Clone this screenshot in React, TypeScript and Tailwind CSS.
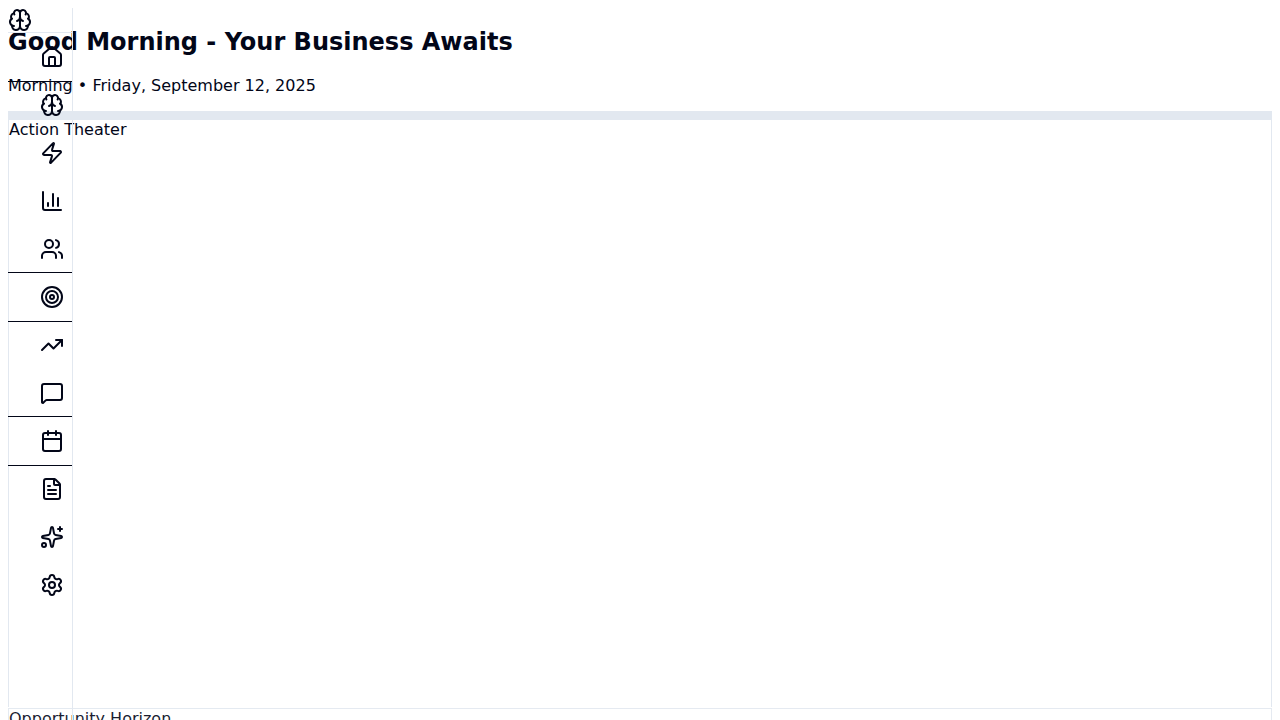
import {
  Brain,
  Calendar,
  ChartColumn,
  FileText,
  House,
  MessageSquare,
  Settings,
  Sparkles,
  Target,
  TrendingUp,
  Users,
  Zap,
  type LucideIcon,
} from 'lucide-react';

type NavItem = { label: string; icon: LucideIcon; rule?: 'below' | 'both' };

const navItems: NavItem[] = [
  { label: 'Home', icon: House, rule: 'below' },
  { label: 'Intelligence', icon: Brain },
  { label: 'Actions', icon: Zap },
  { label: 'Analytics', icon: ChartColumn },
  { label: 'Customers', icon: Users },
  { label: 'Goals', icon: Target, rule: 'both' },
  { label: 'Growth', icon: TrendingUp },
  { label: 'Messages', icon: MessageSquare },
  { label: 'Calendar', icon: Calendar, rule: 'both' },
  { label: 'Documents', icon: FileText },
  { label: 'Assistant', icon: Sparkles },
  { label: 'Settings', icon: Settings },
];

const ruleClasses = {
  below: 'shadow-[0_1px_0_#020617]',
  both: 'shadow-[0_-1px_0_#020617,0_1px_0_#020617]',
};

function Sidebar() {
  return (
    <aside className="absolute top-2 bottom-0 left-2 flex w-[65px] flex-col border-r border-slate-200">
      <div className="border-b border-slate-200">
        <Brain size={24} aria-hidden="true" />
      </div>
      <nav aria-label="Main" className="flex flex-col">
        {navItems.map(({ label, icon: Icon, rule }) => (
          <button
            key={label}
            type="button"
            aria-label={label}
            className={`flex h-12 items-center justify-end pr-2 ${rule ? ruleClasses[rule] : ''}`}
          >
            <Icon size={24} aria-hidden="true" />
          </button>
        ))}
      </nav>
    </aside>
  );
}

export default function App() {
  return (
    <div className="relative h-screen overflow-hidden bg-white font-['DejaVu_Sans',sans-serif] text-base leading-[19px] text-slate-950">
      <main className="flex flex-col px-2 pt-7">
        <header className="flex flex-col gap-5 pb-4">
          <h1 className="text-2xl leading-7 font-bold">Good Morning - Your Business Awaits</h1>
          <p>Morning • Friday, September 12, 2025</p>
        </header>
        <div className="h-2 bg-slate-200" />
        <div className="flex flex-col gap-px">
          <section className="min-h-147 border border-b-0 border-slate-200">
            <h2>Action Theater</h2>
          </section>
          <section className="min-h-147 border border-slate-200 opacity-90">
            <h2>Opportunity Horizon</h2>
          </section>
        </div>
      </main>
      <Sidebar />
    </div>
  );
}
